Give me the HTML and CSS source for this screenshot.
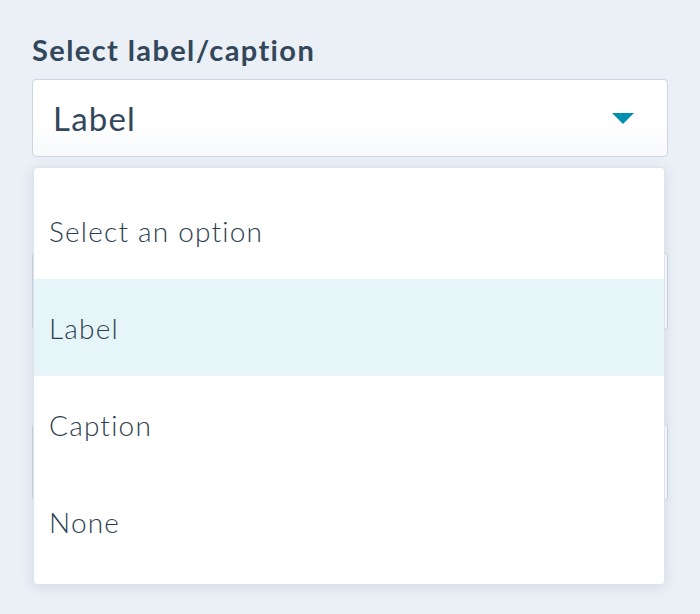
FILE: index.html
```html
<!DOCTYPE html>
<html lang="en">
<head>
<meta charset="utf-8">
<title>Select label/caption</title>
<link rel="stylesheet" href="styles.css">
</head>
<body>
<div class="page">
  <div class="field">
    <div class="field-label">Select label/caption</div>
    <div class="select">
      <span class="select-value">Label</span>
      <svg class="caret" width="22" height="11" viewBox="0 0 22 11"><path d="M0 0 H22 L11 11 Z" fill="#0091ae"/></svg>
    </div>
  </div>
  <div class="field field-under">
    <div class="field-label">Label text</div>
    <div class="input"></div>
  </div>
  <div class="field field-under">
    <div class="field-label">Caption text</div>
    <div class="input"></div>
  </div>

  <ul class="menu">
    <li class="option">Select an option</li>
    <li class="option option-active">Label</li>
    <li class="option">Caption</li>
    <li class="option">None</li>
  </ul>
</div>
</body>
</html>
```
FILE: styles.css
```css
html, body {
  margin: 0;
  padding: 0;
}
body {
  background: #eaf0f6;
  font-family: Lato, "Liberation Sans", sans-serif;
  color: #33475b;
  width: 700px;
  height: 614px;
  overflow: hidden;
}
.page {
  position: relative;
  padding: 32px 32px 0 32px;
}
.field-label {
  font-weight: 700;
  font-size: 29px;
  line-height: 36px;
  letter-spacing: 1.4px;
  margin-bottom: 11px;
}
.select {
  height: 76px;
  border: 1px solid #cbd6e2;
  border-radius: 4px;
  background: linear-gradient(#ffffff 55%, #f7f9fb);
  display: flex;
  align-items: center;
  justify-content: space-between;
  padding: 0 33px 0 20px;
}
.select-value {
  font-size: 33px;
  font-weight: 400;
  letter-spacing: 1.2px;
}
.caret {
  display: block;
}
.field-under {
  margin-top: 48px;
}
.field-under .field-label {
  visibility: hidden;
  margin-bottom: 0;
}
.input {
  height: 76px;
  border: 1px solid #cbd6e2;
  border-radius: 4px;
  background: #fff;
  margin-top: 11px;
}
.field-under + .field-under {
  margin-top: 46px;
}
.menu {
  position: absolute;
  left: 33px;
  top: 167px;
  width: 630px;
  margin: 0;
  padding: 14px 0 14px;
  list-style: none;
  background: #fff;
  border: 1px solid #dfe3eb;
  border-radius: 4px;
  box-shadow: 0 2px 14px rgba(45, 62, 80, 0.12);
}
.option {
  height: 97px;
  display: flex;
  align-items: center;
  padding-left: 15px;
  font-size: 28px;
  font-weight: 300;
  letter-spacing: 1.2px;
  color: #2d3e50;
}
.option-active {
  background: #e5f5f8;
}
```
